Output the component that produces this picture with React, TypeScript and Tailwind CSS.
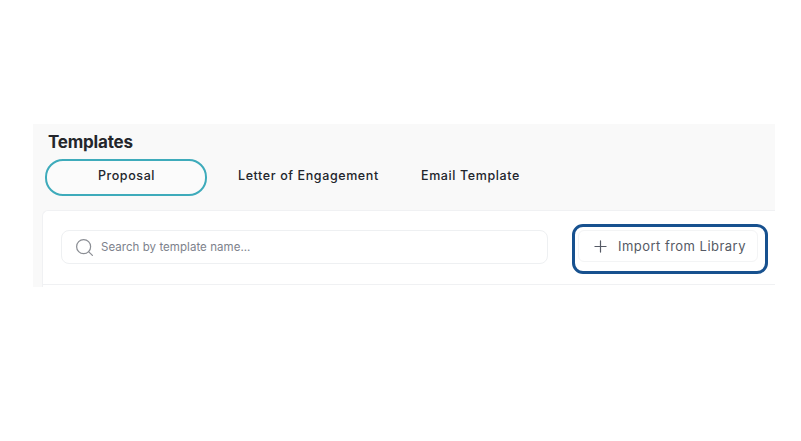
import React from 'react';
import { Plus, Search } from 'lucide-react';

export default function App() {
  return (
    <div className="w-[801px] h-[441px] bg-white overflow-hidden pt-[124px] pl-[33px] font-['Inter',sans-serif]">
      <section className="w-[742px] h-[163px] bg-[#f9f9f9] flex flex-col pl-[9px]">
        <h1 className="pl-[6px] pt-[8px] text-[17px] leading-[21px] font-bold text-[#24262b] tracking-[-0.2px]">Templates</h1>

        {/* Tabs */}
        <div className="flex items-center mt-[6px] ml-[3px] h-[37px] text-[12.5px] font-medium text-[#22252c] tracking-[0.6px]">
          <button className="w-[162px] h-[37px] pb-[2px] pl-[1px] rounded-[18px] border-2 border-[#3eabbb] bg-[#fbfbfb] text-center">Proposal</button>
          <button className="ml-[31px] pb-[2px] w-[141px] whitespace-nowrap text-left">Letter of Engagement</button>
          <button className="ml-[42px] pb-[2px] whitespace-nowrap">Email Template</button>
        </div>

        {/* Card */}
        <div className="mt-[14px] flex-1 bg-white border-t border-l border-[#f0f1f3] rounded-tl-[6px] relative">
          <div className="flex items-start pl-[18px] pt-[19px] pb-[20px] border-b border-[#f0f1f3] h-[74px]">
            <div className="w-[487px] h-[34px] rounded-[8px] border border-[#eef0f2] flex items-center pl-[12px] gap-[6px]">
              <Search size={21} strokeWidth={1.4} className="text-[#8b8e94]" />
              <span className="pt-[2px] text-[11.5px] text-[#7d828c] tracking-[0.05px]">Search by template name...</span>
            </div>
            <button className="ml-[30px] w-[180px] h-[32px] rounded-[6px] border border-[#f3f4f5] flex items-center pl-[12px] text-[13px] text-[#555a65] tracking-[0.47px]">
              <Plus size={19} strokeWidth={1.5} className="text-[#555a65] mr-[8px]" />
              <span className="pt-[2px]">Import from Library</span>
            </button>
          </div>
          {/* Highlight */}
          <div className="absolute left-[529px] top-[13px] w-[196px] h-[50px] rounded-[11px] border-[3px] border-[#17518f]" />
        </div>
      </section>
    </div>
  );
}
